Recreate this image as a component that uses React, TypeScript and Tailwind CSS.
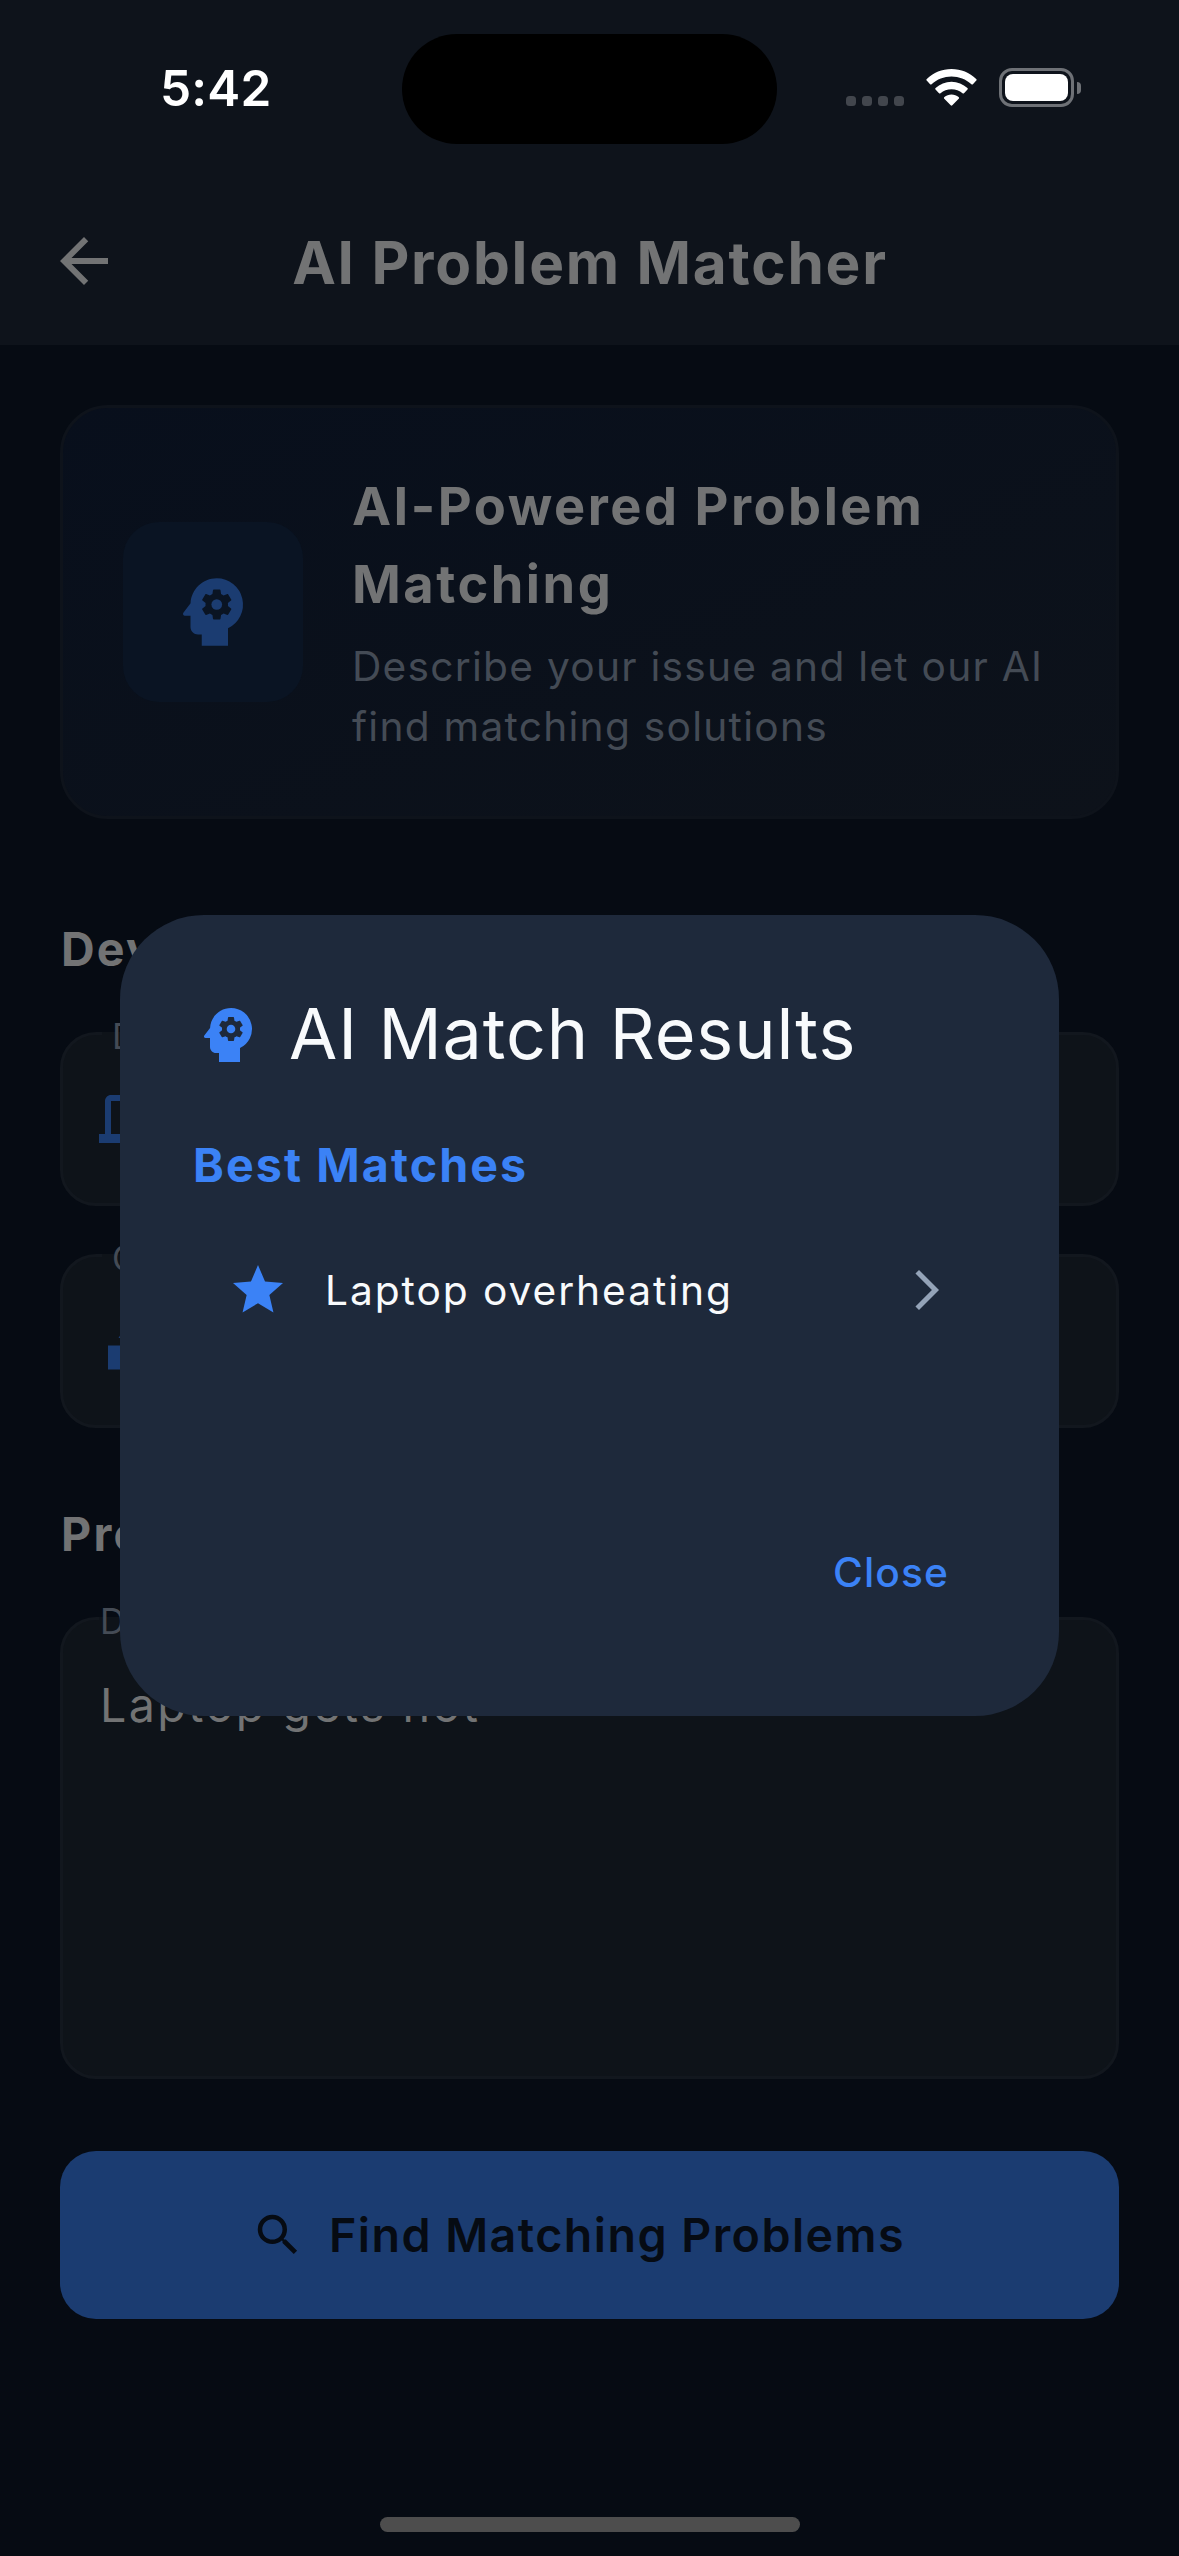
import type { ReactNode } from "react";
import {
  MdArrowBack,
  MdArrowForwardIos,
  MdCategory,
  MdDevices,
  MdPsychology,
  MdSearch,
  MdStar,
} from "react-icons/md";

function WifiIcon() {
  return (
    <svg className="h-[37px] w-[51px]" viewBox="0 0 51 37" fill="#fff">
      <path d="M0.7 11.6Q-0.1 10.8 0.8 9.9C7.4 3.5 16 0 25.5 0S43.6 3.5 50.2 9.9Q51.1 10.8 50.3 11.6L46.9 15.2Q46.2 15.9 45.4 15.2C39.9 10.3 33 7.5 25.5 7.5S11.1 10.3 5.6 15.2Q4.8 15.9 4.1 15.2Z" />
      <path d="M9.5 20.6Q8.7 19.8 9.6 19C13.9 15 19.4 12.7 25.5 12.7S37.1 15 41.4 19Q42.3 19.8 41.5 20.6L38 24.2Q37.3 24.9 36.5 24.2C33.5 21.6 29.7 20.2 25.5 20.2S17.5 21.6 14.5 24.2Q13.7 24.9 13 24.2Z" />
      <path d="M18.3 29.7Q17.5 28.9 18.4 28.1C20.3 26.4 22.8 25.4 25.5 25.4S30.7 26.4 32.6 28.1Q33.5 28.9 32.7 29.7L26.3 36.3Q25.5 37.1 24.7 36.3Z" />
    </svg>
  );
}

function BatteryIcon() {
  return (
    <div className="flex items-center gap-[3px]">
      <div className="h-[39px] w-[75px] rounded-[13px] border-3 border-[#6e7176] p-[3px]">
        <div className="h-full rounded-[8px] bg-white" />
      </div>
      <div className="h-3 w-1 rounded-r-full bg-[#6e7176]" />
    </div>
  );
}

function StatusBar() {
  return (
    <div className="grid h-[177px] grid-cols-[402px_375px_402px] items-start">
      <div className="pt-[58px] pl-[160px] text-[49.5px] leading-[60px] font-semibold tracking-[0.2px] text-white">
        5:42
      </div>
      <div className="mt-[34px] h-[110px] rounded-full bg-black" />
      <div className="flex items-center pt-[68px] pl-[69px]">
        <div className="flex gap-[6px] pt-[27px]">
          {[0, 1, 2, 3].map((dot) => (
            <span key={dot} className="size-[10px] rounded-[3.5px] bg-[#42464d]" />
          ))}
        </div>
        <div className="ml-[22px]">
          <WifiIcon />
        </div>
        <div className="ml-[22px]">
          <BatteryIcon />
        </div>
      </div>
    </div>
  );
}

function AppBar() {
  return (
    <div className="grid h-[168px] grid-cols-[72px_1fr_72px] items-center px-12">
      <MdArrowBack className="size-[72px] text-[#727374]" />
      <h1 className="mt-[3px] pl-px text-center text-[58.5px] leading-[78px] font-bold tracking-[1.77px] text-[#727374]">
        AI Problem Matcher
      </h1>
    </div>
  );
}

function IntroCard() {
  return (
    <section className="flex h-[414px] items-center rounded-[48px] border-3 border-[#0e131b] bg-linear-to-br from-[#080f1c] to-[#0d121a] px-[60px]">
      <div className="flex size-[180px] shrink-0 items-center justify-center rounded-[36px] bg-[#0a1423]">
        <MdPsychology className="size-[90px] text-[#1b3c71]" />
      </div>
      <div className="ml-12 whitespace-nowrap">
        <h2 className="-mt-px pl-px text-[52.4px] leading-[78px] font-bold tracking-[2.5px] text-[#727374]">
          AI-Powered Problem
          <br />
          Matching
        </h2>
        <p className="mt-[14px] pl-px text-[40.7px] leading-[60px] tracking-[1.25px] text-[#444b55]">
          Describe your issue and let our AI
          <br />
          find matching solutions
        </p>
      </div>
    </section>
  );
}

function SectionTitle({ children }: { children: ReactNode }) {
  return (
    <h3 className="pl-px text-[46.6px] leading-[72px] font-bold tracking-[2.2px] text-[#727374]">
      {children}
    </h3>
  );
}

function SelectField({ label, value, icon }: { label: string; value: string; icon: ReactNode }) {
  return (
    <div className="relative flex h-[174px] items-center rounded-[36px] border-3 border-[#12171e] bg-[#0e1319] pl-9 text-[#1b3c71]">
      <span className="absolute -top-[3px] left-[39px] h-[3px] w-[240px] bg-[#0e1319]" />
      <span className="absolute -top-[22px] left-[49px] text-[35px] leading-[46px] tracking-[1.5px] text-[#444b55]">
        {label}
      </span>
      {icon}
      <span className="ml-9 text-[46.6px] tracking-[2.35px] text-[#727374]">{value}</span>
    </div>
  );
}

function DescriptionField() {
  return (
    <div className="relative h-[462px] rounded-[36px] border-3 border-[#12171e] bg-[#0e1319] pt-[49px] pl-[37px]">
      <span className="absolute -top-[3px] left-[36px] h-[3px] w-[420px] bg-[#0e1319]" />
      <span className="absolute -top-[22px] left-[37px] text-[35px] leading-[46px] tracking-[1.5px] text-[#444b55]">
        Describe your problem
      </span>
      <p className="text-[46.6px] leading-[72px] tracking-[2.4px] text-[#727374]">Laptop gets hot</p>
    </div>
  );
}

function ResultsDialog() {
  return (
    <div
      role="dialog"
      className="absolute top-[915px] left-[120px] flex h-[801px] w-[939px] flex-col rounded-[84px] bg-[#1e293b] p-[72px]"
    >
      <div className="flex h-24 items-center">
        <MdPsychology className="size-[72px] text-[#3b82f6]" />
        <h2 className="-mt-[3px] ml-[25px] text-[70px] leading-[96px] tracking-[0.9px] text-[#f8fafc]">
          AI Match Results
        </h2>
      </div>
      <h3 className="mt-[46px] pl-px text-[46.6px] leading-[72px] font-bold tracking-[2.1px] text-[#3b82f6]">
        Best Matches
      </h3>
      <div className="mt-[18px] flex h-36 items-center px-9">
        <MdStar className="-mt-[2px] size-[60px] text-[#3b82f6]" />
        <span className="ml-[37px] text-[40.7px] leading-[60px] tracking-[1.94px] text-[#f8fafc]">
          Laptop overheating
        </span>
        <MdArrowForwardIos className="-mt-[2px] ml-auto size-[48px] text-[#94a3b8]" />
      </div>
      <button className="mt-auto mr-[38px] mb-[41px] self-end text-[40.7px] leading-[60px] font-medium tracking-[1.1px] text-[#3b82f6]">
        Close
      </button>
    </div>
  );
}

export default function App() {
  return (
    <div className="relative flex h-[2556px] w-[1179px] flex-col overflow-hidden bg-[#060b13] font-[Inter,sans-serif]">
      <header className="h-[345px] bg-[#0e131b]">
        <StatusBar />
        <AppBar />
      </header>
      <main className="flex flex-col px-[60px] pt-[60px]">
        <IntroCard />
        <div className="mt-[94px] mb-[47px]">
          <SectionTitle>Device Information</SectionTitle>
        </div>
        <div className="flex flex-col gap-12">
          <SelectField label="Device Type" value="Laptop" icon={<MdDevices className="size-[72px]" />} />
          <SelectField label="Category" value="Hardware" icon={<MdCategory className="size-[72px]" />} />
        </div>
        <div className="mt-[70px] mb-[47px]">
          <SectionTitle>Problem Description</SectionTitle>
        </div>
        <DescriptionField />
        <button className="mt-[72px] flex h-[168px] items-center rounded-[36px] bg-[#1b3c71] pl-[191px] text-[#060b13]">
          <MdSearch className="size-[54px]" />
          <span className="ml-6 text-[46.6px] leading-[60px] font-semibold tracking-[1.45px]">
            Find Matching Problems
          </span>
        </button>
      </main>
      <div className="mx-auto mt-auto mb-6 h-[15px] w-[420px] rounded-full bg-[#4d4d4d]" />
      <ResultsDialog />
    </div>
  );
}
